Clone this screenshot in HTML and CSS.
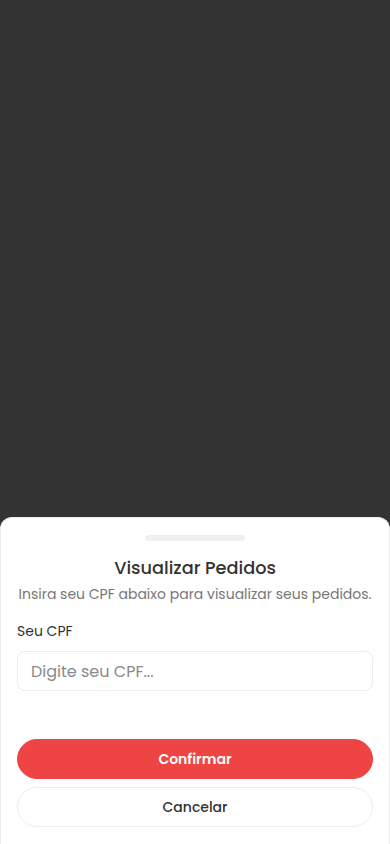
FILE: index.html
```html
<!DOCTYPE html>
<html lang="pt-BR">
<head>
<meta charset="utf-8">
<meta name="viewport" content="width=device-width, initial-scale=1">
<title>Visualizar Pedidos</title>
<link rel="stylesheet" href="styles.css">
</head>
<body>
<div class="screen">
  <div class="overlay"></div>
  <section class="sheet">
    <div class="handle"></div>
    <h2 class="title">Visualizar Pedidos</h2>
    <p class="subtitle">Insira seu CPF abaixo para visualizar seus pedidos.</p>
    <label class="label" for="cpf">Seu CPF</label>
    <input class="input" id="cpf" type="text" placeholder="Digite seu CPF...">
    <div class="actions">
      <button class="btn btn-primary" type="button">Confirmar</button>
      <button class="btn btn-secondary" type="button">Cancelar</button>
    </div>
  </section>
</div>
</body>
</html>
```
FILE: styles.css
```css
* { box-sizing: border-box; }
html, body { margin: 0; padding: 0; height: 100%; }
body {
  background: #333333;
  font-family: "Poppins", "Open Sans", sans-serif;
}
.screen {
  height: 844px;
  display: flex;
  flex-direction: column;
}
.overlay {
  flex: 1;
  background: #333333;
}
.sheet {
  background: #ffffff;
  border: 1px solid #ececec;
  border-bottom: none;
  border-radius: 12px 12px 0 0;
  padding: 17px 16px 17px;
  display: flex;
  flex-direction: column;
}
.handle {
  width: 100px;
  height: 6px;
  border-radius: 3px;
  background: #f0f0f0;
  align-self: center;
}
.title {
  margin: 15px 0 0;
  font-size: 17.7px;
  font-weight: 500;
  color: #333333;
  text-align: center;
  line-height: 24px;
}
.subtitle {
  margin: 4px 0 0;
  font-size: 14px;
  color: #777777;
  text-align: center;
  line-height: 20px;
}
.label {
  margin-top: 17px;
  font-size: 14px;
  color: #333333;
  line-height: 20px;
}
.input {
  margin-top: 10px;
  height: 40px;
  border: 1px solid #ececec;
  border-radius: 8px;
  padding: 0 13px;
  font-family: inherit;
  font-size: 16px;
  color: #333;
  outline: none;
}
.input::placeholder { color: #8a8a8a; }
.actions {
  margin-top: 48px;
  display: flex;
  flex-direction: column;
  gap: 8px;
}
.btn {
  height: 40px;
  border-radius: 20px;
  font-family: inherit;
  font-size: 14px;
  cursor: pointer;
}
.btn-primary {
  background: #ef4444;
  border: 1px solid #ef4444;
  color: #ffffff;
  font-weight: 600;
}
.btn-secondary {
  background: #ffffff;
  border: 1px solid #ececec;
  color: #333333;
  font-weight: 500;
}
```
